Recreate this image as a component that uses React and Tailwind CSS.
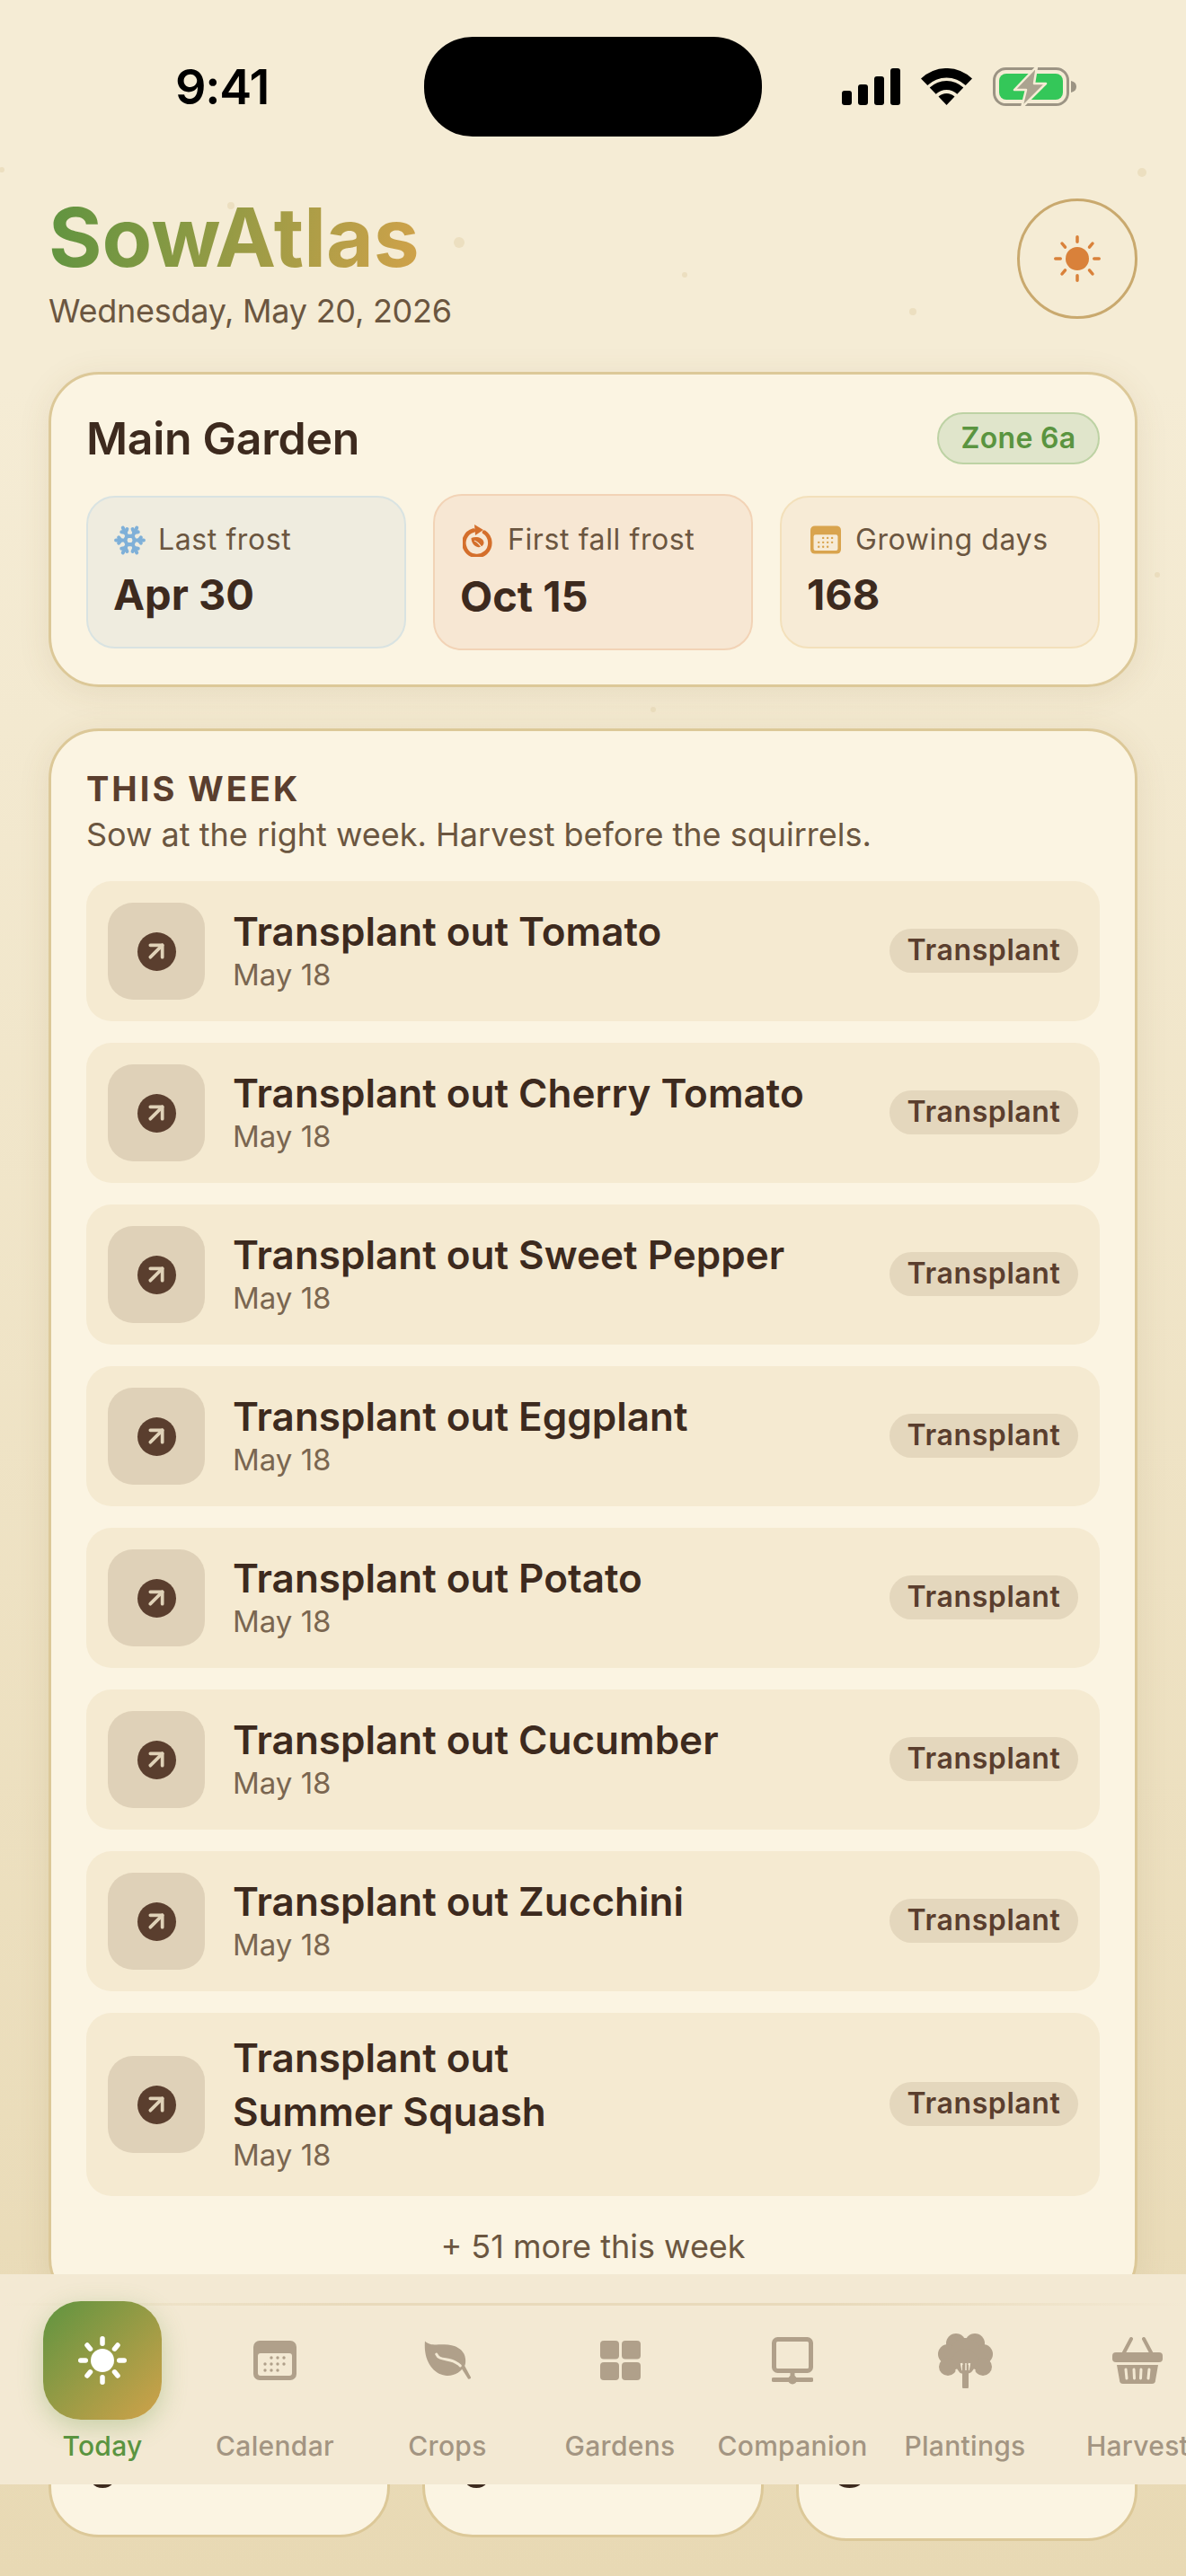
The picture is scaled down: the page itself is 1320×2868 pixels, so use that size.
import React from 'react';
import { ArrowUpRight, Snowflake } from 'lucide-react';

const crops = ['Tomato', 'Cherry Tomato', 'Sweet Pepper', 'Eggplant', 'Potato', 'Cucumber', 'Zucchini', 'Summer Squash'];

const specks = [
  { x: 2, y: 189, r: 3 }, { x: 1271, y: 192, r: 5 }, { x: 257, y: 229, r: 4 }, { x: 511, y: 270, r: 6 },
  { x: 762, y: 306, r: 3 }, { x: 1016, y: 347, r: 4 }, { x: 727, y: 790, r: 3 }, { x: 1288, y: 640, r: 3 },
];

const SunIcon = ({ className, rayWidth = 4 }) => (
  <svg viewBox="0 0 54 54" className={className} fill="currentColor">
    <circle cx="27" cy="27" r="13" />
    <g stroke="currentColor" strokeWidth={rayWidth} strokeLinecap="round">
      <path d="M27 2.750v5.500M27 45.750v5.500M2.750 27h5.500M45.750 27h5.500M10 10l3.500 4.200M44 10l-3.500 4.200M10 44l3.500-4.200M44 44l-3.500-4.200" />
    </g>
  </svg>
);

const CalendarIcon = ({ className, fill, inner }) => (
  <svg viewBox="0 0 48 44" className={className}>
    <rect width="48" height="44" rx="7" fill={fill} />
    <rect x="5" y="14" width="38" height="25" rx="3" fill={inner} />
    <g fill={fill}>
      {[[20, 19], [27, 19], [34, 19], [13, 26], [20, 26], [27, 26], [34, 26], [13, 33], [20, 33], [27, 33]].map(([cx, cy]) => (
        <circle key={`${cx}-${cy}`} cx={cx} cy={cy} r="1.700" />
      ))}
    </g>
  </svg>
);

const FrostLeafIcon = () => (
  <svg viewBox="0 0 34 37" className="w-[34px] h-[37px]" fill="none">
    <path d="M12 7.500A14.500 14.500 0 1 0 24 9.500" stroke="#d46f2c" strokeWidth="4.500" strokeLinecap="round" />
    <path d="M13 1l10 6-9 6z" fill="#d46f2c" />
    <path d="M9.500 16c5-2 13-1 14 5 0 3-3 6-7 5-4-1-7-5-7-10z" fill="#d46f2c" />
    <path d="M13 19c3 1 6 4 9 9" stroke="#f7e7d3" strokeWidth="1.300" />
  </svg>
);

const LeafIcon = () => (
  <svg viewBox="0 0 54 44" className="w-[53px] h-[44px]">
    <path fill="#b0a08a" d="M1 0C6 5 12 4 20 4 34 3 47 9 47 22c0 2 0 4-1 6l7 13c.5 2-3 3-3.500 1L43 32c-5 6-13 8-19 7C10 37-1 22 1 0z" />
    <path d="M14 15c4 9 16 2 27 13" fill="none" stroke="#f3e9d3" strokeWidth="3" strokeLinecap="round" />
  </svg>
);

const GridIcon = () => (
  <svg viewBox="0 0 45 44" className="w-[45px] h-[44px]" fill="#b0a08a">
    <rect width="21" height="20.500" rx="4" />
    <rect x="24" width="21" height="20.500" rx="4" />
    <rect y="24" width="21" height="20" rx="4" />
    <rect x="24" y="24" width="21" height="20" rx="4" />
  </svg>
);

const NetworkIcon = () => (
  <svg viewBox="0 0 46 53" className="w-[46px] h-[53px]" fill="none" stroke="#b0a08a" strokeWidth="5">
    <rect x="2.500" y="2.500" width="41" height="35" rx="4" />
    <path d="M23 38v10" />
    <path d="M2 47.500h42" strokeLinecap="round" />
    <circle cx="23" cy="47.500" r="5" fill="#b0a08a" stroke="none" />
  </svg>
);

const TreeIcon = () => (
  <svg viewBox="0 0 61 62" className="w-[61px] h-[62px]" fill="#b0a08a">
    <circle cx="20" cy="12" r="11" />
    <circle cx="41" cy="12" r="11" />
    <circle cx="11" cy="24" r="11" />
    <circle cx="50" cy="24" r="11" />
    <circle cx="30" cy="22" r="16" />
    <circle cx="11" cy="38" r="10" />
    <circle cx="50" cy="38" r="10" />
    <circle cx="30" cy="32" r="14" />
    <path d="M20 41l8 11M41 41l-8 11M26 34l1.500 8M35 34l-1.500 8" stroke="#f3e9d3" strokeWidth="2.500" fill="none" />
    <path d="M27 36h7v24a3 3 0 0 1-7 0z" />
    <path d="M31 34v8" stroke="#f3e9d3" strokeWidth="1.500" />
  </svg>
);

const BasketIcon = () => (
  <svg viewBox="0 0 56 52" className="w-[56px] h-[52px]">
    <path d="M21 2L12 19M35 2l9 17" stroke="#b0a08a" strokeWidth="4" strokeLinecap="round" fill="none" />
    <rect y="17" width="56" height="11" rx="4" fill="#b0a08a" />
    <path d="M5 31h46l-3 17a4 4 0 0 1-4 4H12a4 4 0 0 1-4-4z" fill="#b0a08a" />
    <path d="M15 36l1 10M24 36l.5 10M32 36l-.5 10M41 36l-1 10" stroke="#f3e9d3" strokeWidth="3" strokeLinecap="round" />
  </svg>
);

const navItems = [
  { label: 'Calendar', icon: <CalendarIcon className="w-[48px] h-[44px]" fill="#b0a08a" inner="#f3e9d3" /> },
  { label: 'Crops', icon: <LeafIcon /> },
  { label: 'Gardens', icon: <GridIcon /> },
  { label: 'Companion', icon: <NetworkIcon /> },
  { label: 'Plantings', icon: <TreeIcon /> },
  { label: 'Harvest', icon: <BasketIcon /> },
];

const StatusBar = () => (
  <div className="flex items-center pt-[41px] pl-[195px] h-[152px]">
    <div className="w-[277px] text-[54px] leading-none font-semibold tracking-[-1.200px] text-black">9:41</div>
    <div className="w-[376px] h-[111px] rounded-[54px] bg-black" />
    <div className="flex items-center ml-[89px]">
      <div className="flex items-end gap-[7px] w-[65px] h-[41px]">
        <div className="w-[11px] h-[16px] rounded-[3px] bg-black" />
        <div className="w-[11px] h-[23px] rounded-[3px] bg-black" />
        <div className="w-[11px] h-[32px] rounded-[3px] bg-black" />
        <div className="w-[11px] h-[41px] rounded-[3px] bg-black" />
      </div>
      <svg viewBox="0 0 57 42" className="w-[57px] h-[42px] ml-[23px]">
        <path d="M0 11.500A41 41 0 0 1 57 11.500L49.700 19A30.500 30.500 0 0 0 7.300 19z" />
        <path d="M9.700 21.600A27 27 0 0 1 47.300 21.600L40.300 28.800A17 17 0 0 0 16.700 28.800z" />
        <path d="M19.500 31.600A13 13 0 0 1 37.500 31.600L28.500 41z" />
      </svg>
      <svg viewBox="0 0 93 46" className="w-[93px] h-[46px] ml-[23px]">
        <rect x="1.500" y="2.500" width="82" height="40" rx="13" fill="none" stroke="#9c9484" strokeWidth="3" />
        <rect x="7" y="8" width="71" height="29" rx="8" fill="#34c759" />
        <path d="M87 16c4 1 6 3 6 6.500S91 28 87 29z" fill="#9c9484" />
        <path d="M49 0L24 26h13l-5 20 27-27H46z" fill="#aba390" stroke="#f5ecd5" strokeWidth="2.500" strokeLinejoin="round" />
      </svg>
    </div>
  </div>
);

const Stat = ({ icon, label, value, className, rowClassName, valueClassName }) => (
  <div className={`rounded-[32px] border-2 pl-[28px] ${className}`}>
    <div className={`flex items-center h-[38px] ${rowClassName}`}>
      {icon}
      <span className="text-[32px] leading-none text-[#6b5640] tracking-[0.6px]">{label}</span>
    </div>
    <div className={`text-[47px] leading-none font-bold text-[#3d2a1e] ${valueClassName}`}>{value}</div>
  </div>
);

const TaskRow = ({ crop }) => (
  <div className="flex items-center rounded-[28px] bg-[#f5ead1] px-[24px] py-[20px] min-h-[156px]">
    <div className="w-[108px] h-[108px] shrink-0 rounded-[28px] bg-[#dfd1b8] flex items-center justify-center">
      <div className="w-[43px] h-[43px] rounded-full bg-[#5a3e2e] flex items-center justify-center">
        <ArrowUpRight className="w-[32px] h-[32px] text-[#e0d2b8]" strokeWidth={2.800} />
      </div>
    </div>
    <div className="ml-[31px] flex-1 min-w-0 pb-[8px]">
      <div className="max-w-[650px] text-[44px] leading-[60px] font-semibold text-balance text-[#3d2a1e]">Transplant out {crop}</div>
      <div className="text-[33px] leading-[36px] text-[#7a6650]">May 18</div>
    </div>
    <div className="shrink-0 h-[49px] w-[210px] mt-[-2px] rounded-full bg-[#e4d7bd] flex items-center justify-center text-[32px] font-semibold tracking-[0.6px] text-[#5a3e2e]">
      Transplant
    </div>
  </div>
);

const BottomNav = () => (
  <div className="absolute left-0 right-0 bottom-[102px] h-[234px] bg-[#f3e9d3] pt-[30px] pl-[18px] overflow-hidden">
    <div className="absolute left-0 right-0 top-[32px] h-[3px] bg-[linear-gradient(90deg,transparent,#e8dabb_30%,#e8dabb_70%,transparent)]" />
    <div className="relative flex">
      <div className="w-[192px] shrink-0 flex flex-col items-center">
        <div className="w-[132px] h-[132px] rounded-[42px] bg-[linear-gradient(135deg,#5f9440,#d0a24a)] shadow-[0_8px_28px_rgba(95,148,64,0.3)] flex items-center justify-center text-white">
          <SunIcon className="w-[54px] h-[54px]" rayWidth={5.500} />
        </div>
        <div className="mt-[9px] text-[30px] leading-[40px] font-medium tracking-[0.3px] text-[#5a9440]">Today</div>
      </div>
      {navItems.map((item) => (
        <div key={item.label} className="w-[192px] shrink-0 flex flex-col items-center">
          <div className="h-[132px] flex items-center justify-center">{item.icon}</div>
          <div className="mt-[9px] text-[30px] leading-[40px] font-medium tracking-[0.3px] text-[#a39582]">{item.label}</div>
        </div>
      ))}
    </div>
  </div>
);

export default function App() {
  return (
    <div className="relative h-[2868px] overflow-hidden bg-[linear-gradient(180deg,#f5ecd5,#f5ecd5_15%,#e8d9b4)] font-[Inter,sans-serif]">
      {specks.map((s) => (
        <div
          key={`${s.x}-${s.y}`}
          className="absolute rounded-full bg-[#ecdfc0]"
          style={{ left: s.x - s.r, top: s.y - s.r, width: s.r * 2, height: s.r * 2 }}
        />
      ))}

      <div className="relative">
        <StatusBar />

        <div className="flex justify-between items-start px-[54px] pt-[69px] h-[262px]">
          <div>
            <h1 className="text-[91px] leading-[88px] mt-[-1px] font-bold w-fit bg-[linear-gradient(100deg,#5f9440,#d0a24a)] bg-clip-text text-transparent">
              SowAtlas
            </h1>
            <div className="mt-[16px] text-[36px] leading-[44px] tracking-[-0.250px] text-[#6b5640]">Wednesday, May 20, 2026</div>
          </div>
          <div className="w-[134px] h-[134px] rounded-full border-[3px] border-[#c9a96e] flex items-center justify-center text-[#d9813a]">
            <SunIcon className="w-[54px] h-[54px]" rayWidth={3.500} />
          </div>
        </div>

        <div className="mx-[54px] h-[351px] rounded-[56px] border-[3px] border-[#dcc898] bg-[#fbf4e2] shadow-[0_6px_36px_rgba(120,90,40,0.1)] px-[39px] pt-[42px]">
          <div className="flex items-center justify-between h-[58px]">
            <div className="text-[50px] leading-none font-semibold tracking-[-0.3px] text-[#3d2a1e]">Main Garden</div>
            <div className="h-[58px] w-[181px] rounded-full border-2 border-[#bdd2a4] bg-[#e0e5cb] flex items-center justify-center text-[32px] font-semibold tracking-[0.3px] text-[#5a9440]">
              Zone 6a
            </div>
          </div>
          <div className="grid grid-cols-3 gap-[30px] mt-[33px] h-[170px] items-center">
            <Stat
              icon={<Snowflake className="w-[37px] h-[37px] text-[#7fb0d8]" strokeWidth={2.600} />}
              label="Last frost"
              value="Apr 30"
              className="h-[170px] border-[#d9e3e2] bg-[#efecdf] pt-[28px]"
              rowClassName="gap-[13px]"
              valueClassName="mt-[18px]"
            />
            <Stat
              icon={<FrostLeafIcon />}
              label="First fall frost"
              value="Oct 15"
              className="h-[174px] border-[#f2d3b6] bg-[#f7e7d3] pt-[30px]"
              rowClassName="pl-[3px] gap-[16px]"
              valueClassName="mt-[20px]"
            />
            <Stat
              icon={<CalendarIcon className="w-[34px] h-[32px]" fill="#d9a44e" inner="#f7ebd6" />}
              label="Growing days"
              value="168"
              className="h-[170px] border-[#f3e0bb] bg-[#f7ebd6] pt-[28px]"
              rowClassName="pl-[4px] gap-[16px]"
              valueClassName="mt-[18px]"
            />
          </div>
        </div>

        <div className="mx-[54px] mt-[46px] rounded-[56px] border-[3px] border-[#dcc898] bg-[#fbf4e2] shadow-[0_6px_36px_rgba(120,90,40,0.1)] px-[39px] pt-[41px] pb-[44px]">
          <div className="text-[38px] leading-[46px] font-bold tracking-[3px] text-[#5a3e2e]">THIS WEEK</div>
          <div className="mt-[6px] text-[36px] leading-[44px] text-[#6b5640]">Sow at the right week. Harvest before the squirrels.</div>
          <div className="flex flex-col gap-[24px] mt-[30px]">
            {crops.map((crop) => (
              <TaskRow key={crop} crop={crop} />
            ))}
          </div>
          <div className="mt-[34px] text-center text-[36px] leading-[44px] text-[#6b5640]">+ 51 more this week</div>
        </div>

        <div className="grid grid-cols-3 gap-[36px] mx-[54px] mt-[40px] items-start">
          {['0', '0', '8'].map((digit, i) => (
            <div
              key={i}
              className={`rounded-[56px] border-[3px] border-[#dcc898] bg-[#fbf4e2] pl-[39px] pt-[113px] ${i === 2 ? 'h-[219px]' : 'h-[215px]'}`}
            >
              <div className="text-[54px] leading-[50px] font-bold text-[#3d2a1e]">{digit}</div>
            </div>
          ))}
        </div>
      </div>

      <BottomNav />
    </div>
  );
}
